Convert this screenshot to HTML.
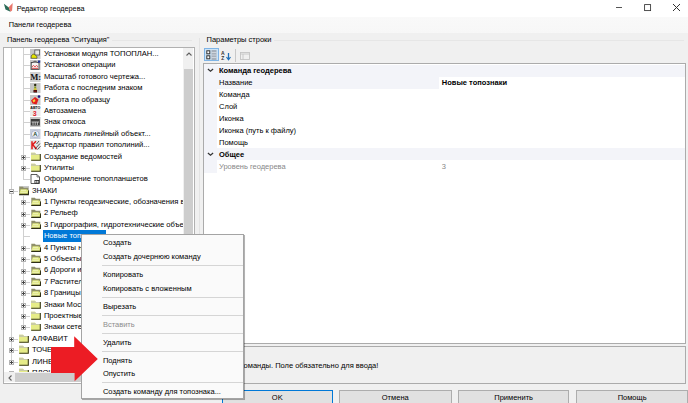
<!DOCTYPE html>
<html><head><meta charset="utf-8">
<style>
*{margin:0;padding:0;box-sizing:border-box}
html,body{width:688px;height:403px;overflow:hidden;background:#f0f0f0;font-family:"Liberation Sans",sans-serif;font-size:7.5px;color:#000}
.a{position:absolute;white-space:nowrap}
#title{left:0;top:0;width:688px;height:17px;background:#fff}
#menubar{left:0;top:17px;width:688px;height:15.6px;background:linear-gradient(#f9f9f9,#f7f7f7)}
.tx{position:absolute;white-space:nowrap;height:12px;line-height:12px}
#tree{left:3px;top:47px;width:191.5px;height:336.5px;background:#fff;border:1px solid #b0b0b0}
.clip{position:absolute;overflow:hidden}
.inner{position:absolute}
.row{position:absolute;height:11.39px;line-height:11.39px;white-space:nowrap}
.tr{font-size:7.6px}
.vl{width:0;border-left:1px dotted #a0a0a0}
.hl{height:0;border-top:1px dotted #a0a0a0}
.box{width:5px;height:5px;border:1px solid #a6a6a6;background:#fff}
.box:before{content:"";position:absolute;left:0.5px;top:1.5px;width:2px;height:1px;background:#333}
.box.p:after{content:"";position:absolute;left:1.5px;top:0.5px;width:1px;height:3px;background:#333}
#grid{left:203px;top:63px;width:483px;height:281px;background:#fff;border:1px solid #ababab}
#desc{left:203px;top:346px;width:483px;height:37.5px;border:1px solid #ababab;background:#f0f0f0}
.btn{position:absolute;top:390px;height:20px;background:#e1e1e1;border:1px solid #adadad;text-align:center;line-height:14px}
#menu{left:80.5px;top:234.4px;width:163.5px;height:164.6px;background:#fafafa;border:1px solid #a4a4a4;box-shadow:1px 1px 0.5px rgba(0,0,0,0.3)}
</style></head><body>
<div id="title" class="a">
  <svg class="a" style="left:0;top:0" width="16" height="16" viewBox="0 0 16 16"><path d="M3.9,3.7 L8.9,7.4 L10.5,11.8 L5.5,9.5 Z" fill="#2b6b58"/><path d="M12.7,3.1 L12.1,10.6 L10.5,11.8 L8.6,7.3 Z" fill="#e9776c"/></svg>
  <div class="tx" style="left:16.7px;top:2.5px;font-size:7.25px">Редактор геодерева</div>
  <div class="a" style="left:616px;top:7px;width:6px;height:1px;background:#555"></div>
  <svg class="a" style="left:643px;top:3px" width="10" height="10" viewBox="0 0 10 10"><rect x="1.6" y="1.6" width="6" height="6" fill="none" stroke="#333" stroke-width="0.85"/></svg>
  <svg class="a" style="left:673px;top:4.3px" width="7" height="7" viewBox="0 0 7 7"><path d="M0,0 L7,7 M7,0 L0,7" stroke="#333" stroke-width="1"/></svg>
</div>
<div id="menubar" class="a"></div>
<div class="tx" style="left:8.7px;top:19.4px;font-size:7.35px">Панели геодерева</div>
<div class="tx" style="left:7px;top:33.5px;font-size:7.35px">Панель геодерева "Ситуация"</div>
<div class="a" style="left:112px;top:39.5px;width:80px;height:1px;background:#e6e6e6"></div>
<div class="tx" style="left:206.5px;top:34px">Параметры строки</div>
<div class="a" style="left:274px;top:39.5px;width:410px;height:1px;background:#e6e6e6"></div>
<div class="a" style="left:199px;top:38px;width:1px;height:346px;background:#e3e3e3"></div>

<div id="tree" class="a"></div>
<div class="clip" style="left:4px;top:48px;width:179.3px;height:324.4px"><div class="inner" style="left:-4px;top:-48px">
<div class="a" style="left:11px;top:47px;width:1px;height:316px;background:#d0d0d0"></div>
<div class="a" style="left:23px;top:47px;width:1px;height:133px;background:#d0d0d0"></div>
<div class="a" style="left:23px;top:196px;width:1px;height:132px;background:#d0d0d0"></div>
<div class="a" style="left:23px;top:54px;width:7px;height:1px;background:#d0d0d0"></div>
<svg class="a" style="left:30.2px;top:49px" width="10.5" height="10" viewBox="0 0 10.5 10"><rect x="0" y="0" width="10.5" height="10" fill="#c6c6c6"/><rect x="4.8" y="1" width="4.8" height="5" fill="#e6e6e6" stroke="#555" stroke-width="0.8"/><path d="M1.2,9.3 Q1,5 4,5 L7,7.5 L7,9.3z" fill="#e4e400" stroke="#333" stroke-width="0.6"/></svg>
<div class="row a tr" style="left:43.9px;top:48.01px">Установки модуля ТОПОПЛАН...</div>
<div class="a" style="left:23px;top:65px;width:7px;height:1px;background:#d0d0d0"></div>
<svg class="a" style="left:30.2px;top:60px" width="10.5" height="10" viewBox="0 0 10.5 10"><rect x="0" y="0" width="10.5" height="10" fill="#c6c6c6"/><rect x="1.2" y="2.5" width="7.8" height="6.8" fill="#f4f4f4" stroke="#333" stroke-width="0.8"/><path d="M1.5,3 L5,1 L8.5,3" stroke="#444" stroke-width="0.7" fill="#888"/><path d="M2,6.8 L3.5,5.5 5,6.8 6.5,5.5 8,6.8 M2,8.3 h6" stroke="#d81e1e" stroke-width="0.8" fill="none"/><rect x="8" y="0.5" width="2.2" height="2.2" fill="#1a2f9a"/></svg>
<div class="row a tr" style="left:43.9px;top:59.40px">Установки операции</div>
<div class="a" style="left:23px;top:77px;width:7px;height:1px;background:#d0d0d0"></div>
<svg class="a" style="left:30.2px;top:72px" width="10.5" height="10" viewBox="0 0 10.5 10"><rect x="0" y="0" width="10.5" height="10" fill="#d2d2d2"/><text x="0.2" y="8.3" font-family="Liberation Serif" font-weight="bold" font-size="8.6" fill="#111">M:</text></svg>
<div class="row a tr" style="left:43.9px;top:70.78px">Масштаб готового чертежа...</div>
<div class="a" style="left:23px;top:88px;width:7px;height:1px;background:#d0d0d0"></div>
<svg class="a" style="left:30.2px;top:83px" width="10.5" height="10" viewBox="0 0 10.5 10"><rect x="0" y="0" width="10.5" height="10" fill="#c6c6c6"/><circle cx="5.2" cy="2" r="1.2" fill="#2b2b10"/><path d="M4.2,3.5 h2 v2 h-2z" fill="#7f9a20"/><path d="M3.8,5.5 h2.8 v1.5 h-2.8z" fill="#d8c020"/><path d="M3.5,7 h3.5 v2.5 h-3.5z" fill="#220a0a"/><path d="M3.8,8.2 h3" stroke="#c01818" stroke-width="0.8"/></svg>
<div class="row a tr" style="left:43.9px;top:82.18px">Работа с последним знаком</div>
<div class="a" style="left:23px;top:100px;width:7px;height:1px;background:#d0d0d0"></div>
<svg class="a" style="left:30.2px;top:95px" width="10.5" height="10" viewBox="0 0 10.5 10"><rect x="0" y="0" width="10.5" height="10" fill="#c6c6c6"/><path d="M1,5.5 L5,2 L8.5,4.5 L6.5,9.5 L2.5,8.5z" fill="#e21c1c"/><path d="M2.5,5.5 L4.5,4 L5.5,6 L3.5,7.5z" fill="#f6d23a"/><circle cx="9" cy="1.6" r="1.3" fill="#1a1a80"/></svg>
<div class="row a tr" style="left:43.9px;top:93.56px">Работа по образцу</div>
<div class="a" style="left:23px;top:111px;width:7px;height:1px;background:#d0d0d0"></div>
<svg class="a" style="left:30.2px;top:106px" width="10.5" height="10" viewBox="0 0 10.5 10"><rect x="0" y="0" width="10.5" height="10" fill="#ececec"/><text x="0.3" y="3.3" font-size="3.6" font-weight="bold" fill="#111">АВТО</text><text x="2.8" y="9.8" font-size="7" font-weight="bold" fill="#e21c2c">3</text></svg>
<div class="row a tr" style="left:43.9px;top:104.96px">Автозамена</div>
<div class="a" style="left:23px;top:122px;width:7px;height:1px;background:#d0d0d0"></div>
<svg class="a" style="left:30.2px;top:117px" width="10.5" height="10" viewBox="0 0 10.5 10"><rect x="0" y="0" width="10.5" height="10" fill="#c8c8c8"/><rect x="0.8" y="2" width="9" height="6.5" fill="#3c3c3c"/><path d="M1.5,5 h7.5 M3,5 v3 M5.2,5 v3 M7.4,5 v3" stroke="#dcdcdc" stroke-width="0.8"/></svg>
<div class="row a tr" style="left:43.9px;top:116.34px">Знак откоса</div>
<div class="a" style="left:23px;top:134px;width:7px;height:1px;background:#d0d0d0"></div>
<svg class="a" style="left:30.2px;top:129px" width="10.5" height="10" viewBox="0 0 10.5 10"><rect x="0" y="0" width="10.5" height="10" fill="#c9cfdc"/><ellipse cx="5.2" cy="5" rx="3.8" ry="3.4" fill="#eef2fb" stroke="#8d97b8" stroke-width="0.6"/><text x="3.2" y="7.3" font-size="5.5" font-weight="bold" fill="#1f4a2a">A</text></svg>
<div class="row a tr" style="left:43.9px;top:127.74px">Подписать линейный объект...</div>
<div class="a" style="left:23px;top:145px;width:7px;height:1px;background:#d0d0d0"></div>
<svg class="a" style="left:30.2px;top:140px" width="10.5" height="10" viewBox="0 0 10.5 10"><rect x="0" y="0" width="10.5" height="10" fill="#e4e4e4"/><path d="M2,1.2 v8 M2,5.2 L6,1.2 M2.8,4.6 L6.5,9.2" stroke="#e01818" stroke-width="1.5" fill="none"/><path d="M5,9 L10,3.5 M7.5,9.5 L10.5,6.2 M6.5,4 L9,1" stroke="#333" stroke-width="0.8"/></svg>
<div class="row a tr" style="left:43.9px;top:139.12px">Редактор правил тополиний...</div>
<div class="a" style="left:23px;top:157px;width:7px;height:1px;background:#d0d0d0"></div>
<svg class="a" style="left:21px;top:155px" width="5" height="5" viewBox="0 0 5 5"><rect x="0.5" y="0.5" width="4" height="4" fill="#f7f7f7" stroke="#b4b4b4" stroke-width="1"/><rect x="1" y="2" width="3" height="1" fill="#444"/><rect x="2" y="1" width="1" height="3" fill="#444"/></svg>
<svg class="a" style="left:30.5px;top:152px" width="10" height="9" viewBox="0 0 10 9"><path d="M0,0.8 h4 l1,1.2 h4.8 v6.8 h-9.8z" fill="#e6ec88"/><path d="M0,0.8 h4 l1,1.2 h4.8 v1 h-9.8z" fill="#c9cba6"/><path d="M0.2,8.3 h9.1 v-6.3" stroke="#3a3a1e" stroke-width="1.1" fill="none"/></svg>
<div class="row a tr" style="left:43.9px;top:150.52px">Создание ведомостей</div>
<div class="a" style="left:23px;top:168px;width:7px;height:1px;background:#d0d0d0"></div>
<svg class="a" style="left:21px;top:166px" width="5" height="5" viewBox="0 0 5 5"><rect x="0.5" y="0.5" width="4" height="4" fill="#f7f7f7" stroke="#b4b4b4" stroke-width="1"/><rect x="1" y="2" width="3" height="1" fill="#444"/><rect x="2" y="1" width="1" height="3" fill="#444"/></svg>
<svg class="a" style="left:30.5px;top:163px" width="10" height="9" viewBox="0 0 10 9"><path d="M0,0.8 h4 l1,1.2 h4.8 v6.8 h-9.8z" fill="#e6ec88"/><path d="M0,0.8 h4 l1,1.2 h4.8 v1 h-9.8z" fill="#c9cba6"/><path d="M0.2,8.3 h9.1 v-6.3" stroke="#3a3a1e" stroke-width="1.1" fill="none"/></svg>
<div class="row a tr" style="left:43.9px;top:161.91px">Утилиты</div>
<div class="a" style="left:23px;top:179px;width:7px;height:1px;background:#d0d0d0"></div>
<svg class="a" style="left:30.2px;top:174px" width="10.5" height="10" viewBox="0 0 10.5 10"><path d="M1,0.5 h6 l2.5,2.5 v6.5 h-8.5z" fill="#fff" stroke="#333" stroke-width="0.8"/><path d="M7,0.5 v2.5 h2.5" fill="none" stroke="#333" stroke-width="0.6"/><rect x="4.5" y="6" width="4.5" height="3.5" fill="#222"/><rect x="5.3" y="6.8" width="1.2" height="2" fill="#fff"/><rect x="7.2" y="6.8" width="1.2" height="2" fill="#fff"/></svg>
<div class="row a tr" style="left:43.9px;top:173.30px">Оформление топопланшетов</div>
<div class="a" style="left:11px;top:191px;width:7px;height:1px;background:#d0d0d0"></div>
<svg class="a" style="left:9px;top:189px" width="5" height="5" viewBox="0 0 5 5"><rect x="0.5" y="0.5" width="4" height="4" fill="#f7f7f7" stroke="#b4b4b4" stroke-width="1"/><rect x="1" y="2" width="3" height="1" fill="#444"/></svg>
<div class="a" style="left:18.6px;top:186px;width:10px;height:9.5px;background:#c9c9c9"></div>
<svg class="a" style="left:18.6px;top:186px" width="10" height="9" viewBox="0 0 10 9"><path d="M0.3,0.8 h3.5 l1,1 h4.5 v5 h-9z" fill="#8f8f6a"/><path d="M1.6,3.2 h5.6 l2.6,1.4 v3.8 h-9.6z" fill="#dfe77e"/><path d="M2,4.6 h5 M1.5,6.3 h6.5" stroke="#f3f6c4" stroke-width="0.8"/><path d="M0.2,8.4 h9.2 l0.3,-4" stroke="#2e2e16" stroke-width="1.1" fill="none"/></svg>
<div class="row a tr" style="left:32px;top:184.69px">ЗНАКИ</div>
<div class="a" style="left:23px;top:202px;width:7px;height:1px;background:#d0d0d0"></div>
<svg class="a" style="left:21px;top:200px" width="5" height="5" viewBox="0 0 5 5"><rect x="0.5" y="0.5" width="4" height="4" fill="#f7f7f7" stroke="#b4b4b4" stroke-width="1"/><rect x="1" y="2" width="3" height="1" fill="#444"/><rect x="2" y="1" width="1" height="3" fill="#444"/></svg>
<svg class="a" style="left:30.5px;top:197px" width="10" height="9" viewBox="0 0 10 9"><path d="M0.3,0.8 h3.5 l1,1 h4.5 v5 h-9z" fill="#8f8f6a"/><path d="M1.6,3.2 h5.6 l2.6,1.4 v3.8 h-9.6z" fill="#dfe77e"/><path d="M2,4.6 h5 M1.5,6.3 h6.5" stroke="#f3f6c4" stroke-width="0.8"/><path d="M0.2,8.4 h9.2 l0.3,-4" stroke="#2e2e16" stroke-width="1.1" fill="none"/></svg>
<div class="row a tr" style="left:43.9px;top:196.07px">1 Пункты геодезические, обозначения в</div>
<div class="a" style="left:23px;top:214px;width:7px;height:1px;background:#d0d0d0"></div>
<svg class="a" style="left:21px;top:212px" width="5" height="5" viewBox="0 0 5 5"><rect x="0.5" y="0.5" width="4" height="4" fill="#f7f7f7" stroke="#b4b4b4" stroke-width="1"/><rect x="1" y="2" width="3" height="1" fill="#444"/><rect x="2" y="1" width="1" height="3" fill="#444"/></svg>
<svg class="a" style="left:30.5px;top:209px" width="10" height="9" viewBox="0 0 10 9"><path d="M0.3,0.8 h3.5 l1,1 h4.5 v5 h-9z" fill="#8f8f6a"/><path d="M1.6,3.2 h5.6 l2.6,1.4 v3.8 h-9.6z" fill="#dfe77e"/><path d="M2,4.6 h5 M1.5,6.3 h6.5" stroke="#f3f6c4" stroke-width="0.8"/><path d="M0.2,8.4 h9.2 l0.3,-4" stroke="#2e2e16" stroke-width="1.1" fill="none"/></svg>
<div class="row a tr" style="left:43.9px;top:207.47px">2 Рельеф</div>
<div class="a" style="left:23px;top:225px;width:7px;height:1px;background:#d0d0d0"></div>
<svg class="a" style="left:21px;top:223px" width="5" height="5" viewBox="0 0 5 5"><rect x="0.5" y="0.5" width="4" height="4" fill="#f7f7f7" stroke="#b4b4b4" stroke-width="1"/><rect x="1" y="2" width="3" height="1" fill="#444"/><rect x="2" y="1" width="1" height="3" fill="#444"/></svg>
<svg class="a" style="left:30.5px;top:220px" width="10" height="9" viewBox="0 0 10 9"><path d="M0.3,0.8 h3.5 l1,1 h4.5 v5 h-9z" fill="#8f8f6a"/><path d="M1.6,3.2 h5.6 l2.6,1.4 v3.8 h-9.6z" fill="#dfe77e"/><path d="M2,4.6 h5 M1.5,6.3 h6.5" stroke="#f3f6c4" stroke-width="0.8"/><path d="M0.2,8.4 h9.2 l0.3,-4" stroke="#2e2e16" stroke-width="1.1" fill="none"/></svg>
<div class="row a tr" style="left:43.9px;top:218.86px">3 Гидрография, гидротехнические объекты</div>
<div class="a" style="left:23px;top:236px;width:7px;height:1px;background:#d0d0d0"></div>
<div class="a" style="left:42.9px;top:230.3px;width:62.9px;height:11.3px;background:#0078d7"></div>
<div class="row a tr" style="left:43.9px;top:230.25px;color:#fff">Новые топознаки</div>
<div class="a" style="left:23px;top:248px;width:7px;height:1px;background:#d0d0d0"></div>
<svg class="a" style="left:21px;top:246px" width="5" height="5" viewBox="0 0 5 5"><rect x="0.5" y="0.5" width="4" height="4" fill="#f7f7f7" stroke="#b4b4b4" stroke-width="1"/><rect x="1" y="2" width="3" height="1" fill="#444"/><rect x="2" y="1" width="1" height="3" fill="#444"/></svg>
<svg class="a" style="left:30.5px;top:243px" width="10" height="9" viewBox="0 0 10 9"><path d="M0.3,0.8 h3.5 l1,1 h4.5 v5 h-9z" fill="#8f8f6a"/><path d="M1.6,3.2 h5.6 l2.6,1.4 v3.8 h-9.6z" fill="#dfe77e"/><path d="M2,4.6 h5 M1.5,6.3 h6.5" stroke="#f3f6c4" stroke-width="0.8"/><path d="M0.2,8.4 h9.2 l0.3,-4" stroke="#2e2e16" stroke-width="1.1" fill="none"/></svg>
<div class="row a tr" style="left:43.9px;top:241.63px">4 Пункты населенные</div>
<div class="a" style="left:23px;top:259px;width:7px;height:1px;background:#d0d0d0"></div>
<svg class="a" style="left:21px;top:257px" width="5" height="5" viewBox="0 0 5 5"><rect x="0.5" y="0.5" width="4" height="4" fill="#f7f7f7" stroke="#b4b4b4" stroke-width="1"/><rect x="1" y="2" width="3" height="1" fill="#444"/><rect x="2" y="1" width="1" height="3" fill="#444"/></svg>
<svg class="a" style="left:30.5px;top:254px" width="10" height="9" viewBox="0 0 10 9"><path d="M0.3,0.8 h3.5 l1,1 h4.5 v5 h-9z" fill="#8f8f6a"/><path d="M1.6,3.2 h5.6 l2.6,1.4 v3.8 h-9.6z" fill="#dfe77e"/><path d="M2,4.6 h5 M1.5,6.3 h6.5" stroke="#f3f6c4" stroke-width="0.8"/><path d="M0.2,8.4 h9.2 l0.3,-4" stroke="#2e2e16" stroke-width="1.1" fill="none"/></svg>
<div class="row a tr" style="left:43.9px;top:253.03px">5 Объекты промышленные</div>
<div class="a" style="left:23px;top:271px;width:7px;height:1px;background:#d0d0d0"></div>
<svg class="a" style="left:21px;top:269px" width="5" height="5" viewBox="0 0 5 5"><rect x="0.5" y="0.5" width="4" height="4" fill="#f7f7f7" stroke="#b4b4b4" stroke-width="1"/><rect x="1" y="2" width="3" height="1" fill="#444"/><rect x="2" y="1" width="1" height="3" fill="#444"/></svg>
<svg class="a" style="left:30.5px;top:266px" width="10" height="9" viewBox="0 0 10 9"><path d="M0.3,0.8 h3.5 l1,1 h4.5 v5 h-9z" fill="#8f8f6a"/><path d="M1.6,3.2 h5.6 l2.6,1.4 v3.8 h-9.6z" fill="#dfe77e"/><path d="M2,4.6 h5 M1.5,6.3 h6.5" stroke="#f3f6c4" stroke-width="0.8"/><path d="M0.2,8.4 h9.2 l0.3,-4" stroke="#2e2e16" stroke-width="1.1" fill="none"/></svg>
<div class="row a tr" style="left:43.9px;top:264.42px">6 Дороги и дорожные</div>
<div class="a" style="left:23px;top:282px;width:7px;height:1px;background:#d0d0d0"></div>
<svg class="a" style="left:21px;top:280px" width="5" height="5" viewBox="0 0 5 5"><rect x="0.5" y="0.5" width="4" height="4" fill="#f7f7f7" stroke="#b4b4b4" stroke-width="1"/><rect x="1" y="2" width="3" height="1" fill="#444"/><rect x="2" y="1" width="1" height="3" fill="#444"/></svg>
<svg class="a" style="left:30.5px;top:277px" width="10" height="9" viewBox="0 0 10 9"><path d="M0.3,0.8 h3.5 l1,1 h4.5 v5 h-9z" fill="#8f8f6a"/><path d="M1.6,3.2 h5.6 l2.6,1.4 v3.8 h-9.6z" fill="#dfe77e"/><path d="M2,4.6 h5 M1.5,6.3 h6.5" stroke="#f3f6c4" stroke-width="0.8"/><path d="M0.2,8.4 h9.2 l0.3,-4" stroke="#2e2e16" stroke-width="1.1" fill="none"/></svg>
<div class="row a tr" style="left:43.9px;top:275.81px">7 Растительность</div>
<div class="a" style="left:23px;top:293px;width:7px;height:1px;background:#d0d0d0"></div>
<svg class="a" style="left:21px;top:291px" width="5" height="5" viewBox="0 0 5 5"><rect x="0.5" y="0.5" width="4" height="4" fill="#f7f7f7" stroke="#b4b4b4" stroke-width="1"/><rect x="1" y="2" width="3" height="1" fill="#444"/><rect x="2" y="1" width="1" height="3" fill="#444"/></svg>
<svg class="a" style="left:30.5px;top:288px" width="10" height="9" viewBox="0 0 10 9"><path d="M0.3,0.8 h3.5 l1,1 h4.5 v5 h-9z" fill="#8f8f6a"/><path d="M1.6,3.2 h5.6 l2.6,1.4 v3.8 h-9.6z" fill="#dfe77e"/><path d="M2,4.6 h5 M1.5,6.3 h6.5" stroke="#f3f6c4" stroke-width="0.8"/><path d="M0.2,8.4 h9.2 l0.3,-4" stroke="#2e2e16" stroke-width="1.1" fill="none"/></svg>
<div class="row a tr" style="left:43.9px;top:287.19px">8 Границы</div>
<div class="a" style="left:23px;top:305px;width:7px;height:1px;background:#d0d0d0"></div>
<svg class="a" style="left:21px;top:303px" width="5" height="5" viewBox="0 0 5 5"><rect x="0.5" y="0.5" width="4" height="4" fill="#f7f7f7" stroke="#b4b4b4" stroke-width="1"/><rect x="1" y="2" width="3" height="1" fill="#444"/><rect x="2" y="1" width="1" height="3" fill="#444"/></svg>
<svg class="a" style="left:30.5px;top:300px" width="10" height="9" viewBox="0 0 10 9"><path d="M0,0.8 h4 l1,1.2 h4.8 v6.8 h-9.8z" fill="#e6ec88"/><path d="M0,0.8 h4 l1,1.2 h4.8 v1 h-9.8z" fill="#c9cba6"/><path d="M0.2,8.3 h9.1 v-6.3" stroke="#3a3a1e" stroke-width="1.1" fill="none"/></svg>
<div class="row a tr" style="left:43.9px;top:298.59px">Знаки Московские</div>
<div class="a" style="left:23px;top:316px;width:7px;height:1px;background:#d0d0d0"></div>
<svg class="a" style="left:21px;top:314px" width="5" height="5" viewBox="0 0 5 5"><rect x="0.5" y="0.5" width="4" height="4" fill="#f7f7f7" stroke="#b4b4b4" stroke-width="1"/><rect x="1" y="2" width="3" height="1" fill="#444"/><rect x="2" y="1" width="1" height="3" fill="#444"/></svg>
<svg class="a" style="left:30.5px;top:311px" width="10" height="9" viewBox="0 0 10 9"><path d="M0,0.8 h4 l1,1.2 h4.8 v6.8 h-9.8z" fill="#e6ec88"/><path d="M0,0.8 h4 l1,1.2 h4.8 v1 h-9.8z" fill="#c9cba6"/><path d="M0.2,8.3 h9.1 v-6.3" stroke="#3a3a1e" stroke-width="1.1" fill="none"/></svg>
<div class="row a tr" style="left:43.9px;top:309.98px">Проектные</div>
<div class="a" style="left:23px;top:327px;width:7px;height:1px;background:#d0d0d0"></div>
<svg class="a" style="left:21px;top:325px" width="5" height="5" viewBox="0 0 5 5"><rect x="0.5" y="0.5" width="4" height="4" fill="#f7f7f7" stroke="#b4b4b4" stroke-width="1"/><rect x="1" y="2" width="3" height="1" fill="#444"/><rect x="2" y="1" width="1" height="3" fill="#444"/></svg>
<svg class="a" style="left:30.5px;top:322px" width="10" height="9" viewBox="0 0 10 9"><path d="M0,0.8 h4 l1,1.2 h4.8 v6.8 h-9.8z" fill="#e6ec88"/><path d="M0,0.8 h4 l1,1.2 h4.8 v1 h-9.8z" fill="#c9cba6"/><path d="M0.2,8.3 h9.1 v-6.3" stroke="#3a3a1e" stroke-width="1.1" fill="none"/></svg>
<div class="row a tr" style="left:43.9px;top:321.37px">Знаки сетей</div>
<div class="a" style="left:11px;top:339px;width:7px;height:1px;background:#d0d0d0"></div>
<svg class="a" style="left:9px;top:337px" width="5" height="5" viewBox="0 0 5 5"><rect x="0.5" y="0.5" width="4" height="4" fill="#f7f7f7" stroke="#b4b4b4" stroke-width="1"/><rect x="1" y="2" width="3" height="1" fill="#444"/><rect x="2" y="1" width="1" height="3" fill="#444"/></svg>
<svg class="a" style="left:18.6px;top:334px" width="10" height="9" viewBox="0 0 10 9"><path d="M0,0.8 h4 l1,1.2 h4.8 v6.8 h-9.8z" fill="#e6ec88"/><path d="M0,0.8 h4 l1,1.2 h4.8 v1 h-9.8z" fill="#c9cba6"/><path d="M0.2,8.3 h9.1 v-6.3" stroke="#3a3a1e" stroke-width="1.1" fill="none"/></svg>
<div class="row a tr" style="left:32px;top:332.75px">АЛФАВИТ</div>
<div class="a" style="left:11px;top:350px;width:7px;height:1px;background:#d0d0d0"></div>
<svg class="a" style="left:9px;top:348px" width="5" height="5" viewBox="0 0 5 5"><rect x="0.5" y="0.5" width="4" height="4" fill="#f7f7f7" stroke="#b4b4b4" stroke-width="1"/><rect x="1" y="2" width="3" height="1" fill="#444"/><rect x="2" y="1" width="1" height="3" fill="#444"/></svg>
<svg class="a" style="left:18.6px;top:345px" width="10" height="9" viewBox="0 0 10 9"><path d="M0,0.8 h4 l1,1.2 h4.8 v6.8 h-9.8z" fill="#e6ec88"/><path d="M0,0.8 h4 l1,1.2 h4.8 v1 h-9.8z" fill="#c9cba6"/><path d="M0.2,8.3 h9.1 v-6.3" stroke="#3a3a1e" stroke-width="1.1" fill="none"/></svg>
<div class="row a tr" style="left:32px;top:344.14px">ТОЧЕЧНЫЕ</div>
<div class="a" style="left:11px;top:362px;width:7px;height:1px;background:#d0d0d0"></div>
<svg class="a" style="left:9px;top:360px" width="5" height="5" viewBox="0 0 5 5"><rect x="0.5" y="0.5" width="4" height="4" fill="#f7f7f7" stroke="#b4b4b4" stroke-width="1"/><rect x="1" y="2" width="3" height="1" fill="#444"/><rect x="2" y="1" width="1" height="3" fill="#444"/></svg>
<svg class="a" style="left:18.6px;top:357px" width="10" height="9" viewBox="0 0 10 9"><path d="M0,0.8 h4 l1,1.2 h4.8 v6.8 h-9.8z" fill="#e6ec88"/><path d="M0,0.8 h4 l1,1.2 h4.8 v1 h-9.8z" fill="#c9cba6"/><path d="M0.2,8.3 h9.1 v-6.3" stroke="#3a3a1e" stroke-width="1.1" fill="none"/></svg>
<div class="row a tr" style="left:32px;top:355.54px">ЛИНЕЙНЫЕ</div>
<div class="a" style="left:11px;top:373px;width:7px;height:1px;background:#d0d0d0"></div>
<svg class="a" style="left:9px;top:371px" width="5" height="5" viewBox="0 0 5 5"><rect x="0.5" y="0.5" width="4" height="4" fill="#f7f7f7" stroke="#b4b4b4" stroke-width="1"/><rect x="1" y="2" width="3" height="1" fill="#444"/><rect x="2" y="1" width="1" height="3" fill="#444"/></svg>
<svg class="a" style="left:18.6px;top:368px" width="10" height="9" viewBox="0 0 10 9"><path d="M0,0.8 h4 l1,1.2 h4.8 v6.8 h-9.8z" fill="#e6ec88"/><path d="M0,0.8 h4 l1,1.2 h4.8 v1 h-9.8z" fill="#c9cba6"/><path d="M0.2,8.3 h9.1 v-6.3" stroke="#3a3a1e" stroke-width="1.1" fill="none"/></svg>
<div class="row a tr" style="left:32px;top:366.93px">ПЛОЩАДНЫЕ</div>
</div></div>
<!-- tree vertical scrollbar -->
<div class="a" style="left:183.3px;top:48px;width:10.2px;height:324.4px;background:#f0f0f0"></div>
<svg class="a" style="left:185.5px;top:51.5px" width="6" height="4" viewBox="0 0 6 4"><path d="M0.5,3.5 L3,1 L5.5,3.5" stroke="#606060" stroke-width="1.1" fill="none"/></svg>
<div class="a" style="left:184px;top:69.2px;width:9px;height:165.2px;background:#cdcdcd"></div>
<!-- tree horizontal scrollbar -->
<div class="a" style="left:4px;top:372.4px;width:189.5px;height:10px;background:#f0f0f0"></div>
<svg class="a" style="left:7.5px;top:374.5px" width="4" height="6" viewBox="0 0 4 6"><path d="M3.5,0.5 L1,3 L3.5,5.5" stroke="#606060" stroke-width="1.1" fill="none"/></svg>
<div class="a" style="left:15.3px;top:373.2px;width:150px;height:8.8px;background:#cdcdcd"></div>

<!-- property toolbar -->
<div class="a" style="left:204px;top:48px;width:15px;height:13.2px;background:#cce4f7;border:1px solid #7fb4e6"></div>
<div class="a" style="left:234.5px;top:49px;width:1px;height:13px;background:#c8c8c8"></div>
<svg class="a" style="left:205px;top:49px" width="13" height="12" viewBox="0 0 13 12"><rect x="1.8" y="1.8" width="3" height="3" fill="#fff" stroke="#333" stroke-width="1"/><rect x="1.8" y="6.8" width="3" height="3" fill="#fff" stroke="#333" stroke-width="1"/><rect x="6.5" y="1" width="5" height="10" fill="#a6b0bb"/><path d="M6.5,3.5 h5 M6.5,6 h5 M6.5,8.5 h5" stroke="#d9dee5" stroke-width="0.8"/></svg>
<svg class="a" style="left:221px;top:50.5px" width="10" height="10" viewBox="0 0 10 10"><text x="0" y="4.4" font-size="5" font-weight="bold" fill="#333">A</text><text x="0.3" y="9.4" font-size="5" font-weight="bold" fill="#333">Z</text><path d="M7.5,2 v6" stroke="#1e6fb8" stroke-width="1.3"/><path d="M5.5,6 L7.5,8.8 L9.5,6" stroke="#1e6fb8" stroke-width="1.2" fill="none"/></svg>
<svg class="a" style="left:239.5px;top:51.5px" width="10" height="8" viewBox="0 0 10 8"><rect x="0.5" y="0.5" width="9" height="7" fill="#f0f0f0" stroke="#c4c4c4" stroke-width="0.9"/><path d="M0.5,2 h9 M3,2 v5.5" stroke="#c4c4c4" stroke-width="0.9"/></svg>

<div id="grid" class="a"></div>
<div class="a" style="left:204px;top:64px;width:12.5px;height:108.50px;background:#f3f4f9"></div>
<div class="a" style="left:204px;top:64.90px;width:481px;height:11.90px;background:#f3f4f9"></div>
<svg class="a" style="left:206.5px;top:68.40px" width="7" height="5" viewBox="0 0 7 5"><path d="M0.9,1.1 L3.5,3.3 L6.1,1.1" stroke="#333" stroke-width="1.25" fill="none"/></svg>
<div class="row a" style="left:219px;top:65.40px;height:11.9px;line-height:11.9px;font-weight:bold">Команда геодерева</div>
<div class="a" style="left:216.5px;top:76.80px;width:222.8px;height:11.90px;background:#f3f4f9"></div>
<div class="row a" style="left:219px;top:77.30px;height:11.9px;line-height:11.9px;color:#000">Название</div>
<div class="row a" style="left:441.8px;top:77.30px;height:11.9px;line-height:11.9px;color:#000;font-weight:bold">Новые топознаки</div>
<div class="row a" style="left:219px;top:89.20px;height:11.9px;line-height:11.9px;color:#000">Команда</div>
<div class="row a" style="left:219px;top:101.10px;height:11.9px;line-height:11.9px;color:#000">Слой</div>
<div class="row a" style="left:219px;top:113.00px;height:11.9px;line-height:11.9px;color:#000">Иконка</div>
<div class="row a" style="left:219px;top:124.90px;height:11.9px;line-height:11.9px;color:#000">Иконка (путь к файлу)</div>
<div class="row a" style="left:219px;top:136.80px;height:11.9px;line-height:11.9px;color:#000">Помощь</div>
<div class="a" style="left:204px;top:148.20px;width:481px;height:11.90px;background:#f3f4f9"></div>
<svg class="a" style="left:206.5px;top:151.70px" width="7" height="5" viewBox="0 0 7 5"><path d="M0.9,1.1 L3.5,3.3 L6.1,1.1" stroke="#333" stroke-width="1.25" fill="none"/></svg>
<div class="row a" style="left:219px;top:148.70px;height:11.9px;line-height:11.9px;font-weight:bold">Общее</div>
<div class="row a" style="left:219px;top:160.60px;height:11.9px;line-height:11.9px;color:#888">Уровень геодерева</div>
<div class="row a" style="left:441.8px;top:160.60px;height:11.9px;line-height:11.9px;color:#888;font-weight:normal">3</div>
<div id="desc" class="a"></div>
<div class="tx" style="left:204.6px;top:359.5px">Название команды. Поле обязательно для ввода!</div>

<div class="btn" style="left:221.5px;width:111.5px;border-color:#0078d7;border-width:1.3px">OK</div>
<div class="btn" style="left:339px;width:112.5px">Отмена</div>
<div class="btn" style="left:458px;width:111.3px">Применить</div>
<div class="btn" style="left:576.4px;width:111.5px">Помощь</div>

<div id="menu" class="a"></div>
<div class="row a" style="left:102.9px;top:236.35px;height:13.7px;line-height:13.7px;color:#000">Создать</div>
<div class="row a" style="left:102.9px;top:250.05px;height:13.7px;line-height:13.7px;color:#000">Создать дочернюю команду</div>
<div class="a" style="left:101.5px;top:264.80px;width:141.5px;height:1px;background:#d5d5d5"></div>
<div class="row a" style="left:102.9px;top:268.05px;height:13.7px;line-height:13.7px;color:#000">Копировать</div>
<div class="row a" style="left:102.9px;top:281.75px;height:13.7px;line-height:13.7px;color:#000">Копировать с вложенным</div>
<div class="a" style="left:101.5px;top:296.50px;width:141.5px;height:1px;background:#d5d5d5"></div>
<div class="row a" style="left:102.9px;top:299.75px;height:13.7px;line-height:13.7px;color:#000">Вырезать</div>
<div class="a" style="left:101.5px;top:314.50px;width:141.5px;height:1px;background:#d5d5d5"></div>
<div class="row a" style="left:102.9px;top:317.75px;height:13.7px;line-height:13.7px;color:#8d8d8d">Вставить</div>
<div class="a" style="left:101.5px;top:332.50px;width:141.5px;height:1px;background:#d5d5d5"></div>
<div class="row a" style="left:102.9px;top:335.75px;height:13.7px;line-height:13.7px;color:#000">Удалить</div>
<div class="a" style="left:101.5px;top:350.50px;width:141.5px;height:1px;background:#d5d5d5"></div>
<div class="row a" style="left:102.9px;top:353.75px;height:13.7px;line-height:13.7px;color:#000">Поднять</div>
<div class="row a" style="left:102.9px;top:367.45px;height:13.7px;line-height:13.7px;color:#000">Опустить</div>
<div class="a" style="left:101.5px;top:382.20px;width:141.5px;height:1px;background:#d5d5d5"></div>
<div class="row a" style="left:102.9px;top:385.45px;height:13.7px;line-height:13.7px;color:#000">Создать команду для топознака...</div>
<svg class="a" style="left:0;top:0" width="688" height="403" viewBox="0 0 688 403"><polygon points="51,347.1 74.2,347.1 74.2,336.3 97.8,359 74.6,381.3 74.6,372.9 51,372.9" fill="#ec1c24"/></svg>
</body></html>
